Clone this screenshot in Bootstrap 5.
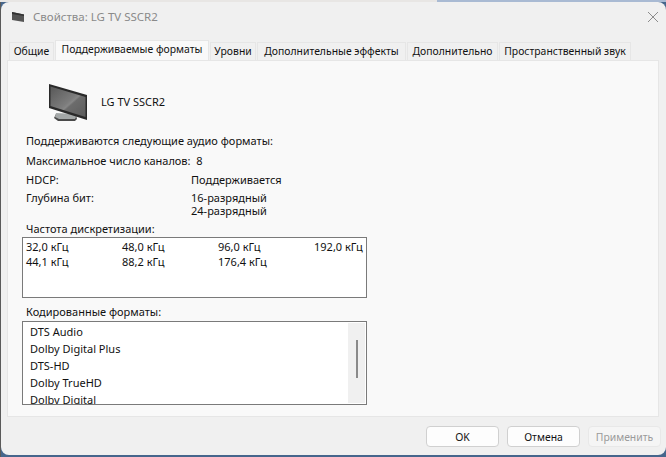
<!DOCTYPE html>
<html lang="ru">
<head>
<meta charset="utf-8">
<title>Свойства: LG TV SSCR2</title>
<link href="https://cdn.jsdelivr.net/npm/bootstrap@5.3.0/dist/css/bootstrap.min.css" rel="stylesheet">
<style>
html,body{height:100%;}
body{margin:0;background:linear-gradient(to right,#e8e6e4 0 437px,#a9bad3 437px) top/100% 2px no-repeat,linear-gradient(to right,#5a5a5a 0 1px,transparent 1px),#46668c;overflow:hidden;font-family:"Noto Sans","Liberation Sans",sans-serif;font-size:11px;color:#111;line-height:16px;}
.dlg{margin:2px 0 0 1px;height:453px;background:#f0f0f0;border-radius:8px;padding:0 7px 0 6px;}
.dlg-title{height:39px;padding:0 0 10px 4px;color:#8a8a8a;font-size:11.5px;}
.dlg-x{width:12px;height:12px;}
.tabbar{height:19px;border:0;padding-left:2px;flex-wrap:nowrap;margin-bottom:0;position:relative;z-index:1;}
.tabbar .nav-link{height:18px;margin-top:1px;padding:0;text-align:center;border:1px solid #e6e6e6;border-bottom:0;border-radius:0;background:#f0f0f0;color:#111;font-size:10.4px;line-height:17px;white-space:nowrap;margin-left:1px;}
.tabbar .nav-link.active{height:20px;margin-top:-1px;background:#f9f9f9;color:#111;border-color:#e6e6e6;line-height:17px;margin-left:1px;}
.tab-a{width:45px;margin-left:0!important;}
.tab-b{width:154px;}
.tab-c{width:46px;}
.tab-d{width:149px;}
.tab-e{width:91px;}
.tab-f{width:132px;}
.pane{height:357px;background:#f9f9f9;border:1px solid #e6e6e6;padding:0 0 0 18px;}
.devrow{height:56px;padding-left:22px;gap:13px;margin-top:13px;}
.fline{height:16px;}
.w-key{width:165px;flex:none;}
.bits{line-height:13px;padding-top:1px;}
.ft1{margin-top:3px;}
.ft2{margin-top:4px;}
.ft3{margin-top:3px;}
.ft4{margin-top:2px;height:27px;}
.ft5{height:20px;}
.freq{width:345px;height:61px;margin:0 0 0 -4px;background:#fff;border:1px solid #7a7a7a;padding:1px 0 0 3px;display:grid;grid-template-columns:repeat(4,96px);grid-auto-rows:15px;white-space:nowrap;}
.codes-label{margin-top:6px;}
.codes{width:345px;height:84px;margin:1px 0 0 -4px;background:#fff;border:1px solid #7a7a7a;overflow:hidden;}
.codes-list{padding:1px 0 0 7px;}
.codes-list div{height:17px;line-height:17px;white-space:nowrap;}
.sbar{width:17px;margin:1px 1px 1px 0;background:#f0f0f0;}
.sthumb{width:2px;height:38px;background:#8a8a8a;margin:17px 0 0 8px;}
.foot{height:30px;margin-top:9px;gap:8px;margin-right:-2px;}
.fbtn{width:73px;height:21px;padding:0;background:#fdfdfd;border:1px solid #d0d0d0;border-radius:4px;font-size:10.4px;line-height:18px;color:#111;}
.fbtn:disabled{background:#f5f5f5;border-color:#e8e8e8;color:#9a9a9a;opacity:1;}
</style>
</head>
<body>
<div class="dlg">
  <div class="dlg-title d-flex align-items-center">
    <svg width="14" height="12" viewBox="0 0 14 12" class="me-2"><path d="M1 1 13 3.500V11L1 9z" fill="#555"/><path d="M1 1 13 3.500V5L1 3z" fill="#333"/></svg>
    <span class="flex-grow-1">Свойства: LG TV SSCR2</span>
    <svg class="dlg-x" viewBox="0 0 12 12"><path d="M1 1 11 11M11 1 1 11" stroke="#8c8c8c" stroke-width="1" fill="none"/></svg>
  </div>
  <ul class="nav nav-tabs tabbar">
    <li class="nav-item"><a class="nav-link tab-a" href="#">Общие</a></li>
    <li class="nav-item"><a class="nav-link tab-b active" href="#">Поддерживаемые форматы</a></li>
    <li class="nav-item"><a class="nav-link tab-c" href="#">Уровни</a></li>
    <li class="nav-item"><a class="nav-link tab-d" href="#">Дополнительные эффекты</a></li>
    <li class="nav-item"><a class="nav-link tab-e" href="#">Дополнительно</a></li>
    <li class="nav-item"><a class="nav-link tab-f" href="#">Пространственный звук</a></li>
  </ul>
  <div class="pane">
    <div class="devrow d-flex align-items-center">
      <svg width="40" height="40" viewBox="0 0 40 40">
        <defs><linearGradient id="scr" x1="0" y1="0" x2="1" y2="1"><stop offset="0" stop-color="#585858"/><stop offset=".5" stop-color="#7c7c7c"/><stop offset=".56" stop-color="#868686"/><stop offset=".6" stop-color="#6c6c6c"/><stop offset="1" stop-color="#5c5c5c"/></linearGradient></defs>
        <path d="M8 32 6 36l4 3h17l2-2-1-4z" fill="#4a4a4a"/>
        <path d="M8 31 7 35l4 2h16l1-2-1-3z" fill="#a4a8a8"/>
        <path d="M1 2 39 13V38L1 26z" fill="#2a2a2a"/>
        <path d="M2.500 4.500 37.500 15V35L2.500 24z" fill="url(#scr)"/>
      </svg>
      <span>LG TV SSCR2</span>
    </div>
    <div class="fline ft1">Поддерживаются следующие аудио форматы:</div>
    <div class="fline ft2">Максимальное число каналов:&nbsp; 8</div>
    <div class="fline ft3 d-flex"><span class="w-key">HDCP:</span><span>Поддерживается</span></div>
    <div class="fline ft4 d-flex"><span class="w-key">Глубина бит:</span><span class="bits">16-разрядный<br>24-разрядный</span></div>
    <div class="ft5 d-flex align-items-end">Частота дискретизации:</div>
    <div class="freq">
      <span>32,0 кГц</span><span>48,0 кГц</span><span>96,0 кГц</span><span>192,0 кГц</span>
      <span>44,1 кГц</span><span>88,2 кГц</span><span>176,4 кГц</span>
    </div>
    <div class="codes-label fline">Кодированные форматы:</div>
    <div class="codes d-flex">
      <div class="codes-list flex-grow-1">
        <div>DTS Audio</div><div>Dolby Digital Plus</div><div>DTS-HD</div><div>Dolby TrueHD</div><div>Dolby Digital</div>
      </div>
      <div class="sbar"><div class="sthumb"></div></div>
    </div>
  </div>
  <div class="foot d-flex justify-content-end">
    <button class="btn fbtn">OK</button>
    <button class="btn fbtn">Отмена</button>
    <button class="btn fbtn" disabled>Применить</button>
  </div>
</div>
</body>
</html>
